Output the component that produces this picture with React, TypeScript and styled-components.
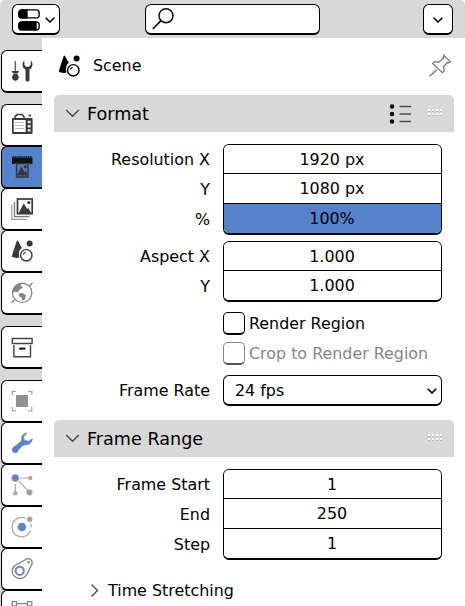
import React from 'react';
import styled, { createGlobalStyle, css } from 'styled-components';

const GREY = '#d8d8d8';
const BLUE = '#5682cb';
const INK = '#3a3a3c';

const GlobalStyle = createGlobalStyle`
  * { box-sizing: border-box; }
  html, body { margin: 0; background: #fff; overflow: hidden; }
  svg { display: block; flex: none; }
`;

const Editor = styled.div`
  width: 465px;
  height: 606px;
  overflow: hidden;
  display: flex;
  flex-direction: column;
  background: #fff;
  color: #000;
  font: 15.9px/20px 'DejaVu Sans', sans-serif;
  white-space: nowrap;
`;

const outlined = css`
  border: 1px solid #000;
  border-bottom-width: 2px;
  border-radius: 6px;
  background: #fff;
`;

const TopBar = styled.header`
  height: 38px;
  flex: none;
  padding: 4px 12px 3px;
  display: flex;
  align-items: stretch;
  background: ${GREY};
  border-radius: 5px 5px 0 0;
`;

const BarButton = styled.button<{ $width: number }>`
  ${outlined}
  width: ${p => p.$width}px;
  padding: 1px 0 0;
  display: flex;
  align-items: center;
  justify-content: center;
  gap: 5px;
`;

const Search = styled.div`
  ${outlined}
  width: 175px;
  margin: 0 103px 0 85px;
  padding-left: 5px;
  display: flex;
  align-items: center;
`;

const Body = styled.div`
  flex: 1;
  min-height: 0;
  display: flex;
`;

const TabColumn = styled.nav`
  width: 42px;
  flex: none;
  padding: 12px 0 0 1px;
  display: flex;
  flex-direction: column;
  gap: 11px;
  background: ${GREY};
`;

const TabGroup = styled.div`
  display: flex;
  flex-direction: column;
`;

const Tab = styled.button<{ $active?: boolean }>`
  ${outlined}
  height: 43px;
  flex: none;
  padding: 0;
  border-right: 0;
  border-radius: 6px 0 0 6px;
  background: ${p => (p.$active ? BLUE : '#fff')};
  display: flex;
  align-items: center;
  justify-content: center;
  & + & { margin-top: -1px; }
`;

const Panel = styled.main`
  flex: 1;
  padding: 0 11px 0 12px;
`;

const ContextRow = styled.div`
  height: 57px;
  padding: 0 2px 2px 3px;
  display: flex;
  align-items: center;
`;

const ContextName = styled.span`
  flex: 1;
  margin-left: 12px;
`;

const SectionBlock = styled.section`
  & + & { margin-top: 14px; }
`;

const SectionHeader = styled.div`
  width: 400px;
  height: 37px;
  padding: 0 11px;
  display: flex;
  align-items: center;
  background: ${GREY};
  border-radius: 5px 5px 0 0;
`;

const SectionTitle = styled.span`
  flex: 1;
  margin-left: 7px;
  font-size: 17.6px;
  line-height: 22px;
`;

const Grip = styled.span`
  width: 14px;
  height: 8px;
  margin: 0 1px 1px 16px;
  display: grid;
  grid-template-columns: repeat(4, 2px);
  grid-auto-rows: 2px;
  gap: 2px;
`;

const GripDot = styled.i`
  background: #fff;
  box-shadow: 0 1px #b4b4b4;
`;

const Fields = styled.div`
  padding-top: 12px;
`;

const FieldRow = styled.div<{ $gap?: number }>`
  margin-top: ${p => p.$gap ?? 0}px;
  display: grid;
  grid-template-columns: 156px 219px;
  column-gap: 13px;
`;

const Labels = styled.div`
  display: flex;
  flex-direction: column;
  text-align: right;
`;

const Label = styled.label`
  height: 30px;
  line-height: 32px;
`;

const NumberStack = styled.div`
  ${outlined}
  overflow: hidden;
  display: flex;
  flex-direction: column;
`;

const NumberField = styled.div<{ $filled?: boolean }>`
  height: 30px;
  line-height: 29px;
  text-align: center;
  padding-right: 1px;
  background: ${p => (p.$filled ? BLUE : '#fff')};
  & + & { border-top: 1px solid #000; }
  &:first-child { height: 28px; line-height: 30px; }
`;

const CheckRow = styled.label<{ $disabled?: boolean; $gap: number }>`
  height: 23px;
  margin: ${p => p.$gap}px 0 0 169px;
  display: flex;
  align-items: center;
  gap: 4px;
  color: ${p => (p.$disabled ? '#868686' : '#000')};
`;

const CheckBox = styled.span<{ $disabled?: boolean }>`
  ${outlined}
  width: 22px;
  height: 23px;
  border-radius: 5px;
  ${p => p.$disabled && 'border-color: #858585; border-bottom-color: #555;'}
`;

const Select = styled.div`
  ${outlined}
  height: 31px;
  padding: 2px 4px 0 11px;
  display: flex;
  align-items: center;
  justify-content: space-between;
`;

const SubSection = styled.div`
  margin-top: 21px;
  padding-left: 35px;
  display: flex;
  align-items: center;
  gap: 8px;
`;

const Chevron = () => (
  <svg width="10" height="6" viewBox="0 0 10 6" fill="none" stroke="#000" strokeWidth="1.6">
    <path d="M.7.7 5 5 9.3.7" />
  </svg>
);

const Disclosure = ({ open = true }: { open?: boolean }) =>
  open ? (
    <svg width="15" height="10" viewBox="0 0 15 10" fill="none" stroke="#444" strokeWidth="1.3">
      <path d="m1.2 1 6.300 6.300L13.800 1" />
    </svg>
  ) : (
    <svg width="11" height="16" viewBox="0 0 11 16" fill="none" stroke="#444" strokeWidth="1.3">
      <path d="m2.500 1.500 6 6-6 6" />
    </svg>
  );

const SceneIcon = ({ color = INK }: { color?: string }) => (
  <svg width="24" height="24" viewBox="0 0 24 24">
    <path d="M6.500 2.500q.8-2.200 1.800 0l3.500 6.300c-2.600 2-3.500 5.200-2.300 9.700-2.500.800-5.500.500-7.800-1Z" fill={color} />
    <circle cx="19.600" cy="4.500" r="3" fill={color} />
    <circle cx="16.300" cy="16.300" r="5.700" fill="#fff" stroke={color} strokeWidth="1.400" />
    <path d="M13.300 15.700a3 3 0 0 1 2.300-2.300" fill="none" stroke={color} strokeWidth="1.200" />
  </svg>
);

const PropertiesIcon = () => (
  <svg width="22" height="22" viewBox="0 0 22 22" fill="#fff" stroke="#000" strokeWidth="1.300">
    <rect x=".8" y=".9" width="20.400" height="8" rx="3" />
    <path d="M9 1H3.800a3 3 0 0 0-3 3v1.900a3 3 0 0 0 3 3H9Z" fill="#000" />
    <rect x=".8" y="12.900" width="20.400" height="8" rx="3" />
    <path d="M18 13H3.800a3 3 0 0 0-3 3v1.900a3 3 0 0 0 3 3H18Z" fill="#000" />
  </svg>
);

const SearchIcon = () => (
  <svg width="24" height="24" viewBox="0 0 24 24" fill="none" stroke="#111" strokeWidth="1.500">
    <circle cx="15" cy="8.700" r="7" />
    <path d="m10 13.700-8.200 8.300" strokeWidth="1.700" />
  </svg>
);

const PinIcon = () => (
  <svg width="24" height="24" viewBox="0 0 24 24" fill="none" stroke="#777" strokeWidth="1.300">
    <path d="m15.700 1.300 6.600 6.300-1.700 1.100-1.300-.2-3.800 4.300.8 4-1.900 1.900L4.700 9.500l1.900-1.900 4 .7 4.600-3.900ZM8.800 15.500 1.500 22.500" />
  </svg>
);

const PresetIcon = () => (
  <svg width="24" height="22" viewBox="0 0 24 22" fill="#000">
    {[3.500, 11, 18.500].map(y => (
      <g key={y}>
        <circle cx="4" cy={y} r="2.200" />
        <path d={`M11.500 ${y}h11.500`} stroke="#444" strokeWidth="1.400" />
      </g>
    ))}
  </svg>
);

const ToolIcon = () => (
  <svg width="24" height="24" viewBox="0 0 24 24" fill={INK}>
    <path d="M4.700 2h1.100v10H4.700ZM2 12h6.800v1.300L7.500 14.300h-4L2 13.300Z" />
    <path d="M3.800 14.500h3.200c3 3 1.800 7.300-1.600 7.300s-4.600-4.300-1.600-7.300Z" />
    <path d="M14.300 1.500v4l1.500 2.200h3.400l1.600-2.200v-4c2.600 2.700 2.200 7-1.300 9.100V21c0 2-4 2-4 0V10.600c-3.600-2.100-3.900-6.400-1.200-9.100Z" />
  </svg>
);

const RenderIcon = () => (
  <svg width="24" height="24" viewBox="0 0 24 24">
    <path d="M5 6V3.600L7 1.600h5l2 2V6" fill="#fff" stroke={INK} strokeWidth="1.500" />
    <rect x="2" y="5" width="20.600" height="16" rx="1" fill={INK} />
    <path d="M3.700 7h12v12H3.700Z" fill="#fff" />
    <path d="M5 9.500h9M5 12.500h9M5 15.500h9" stroke="#aaa" strokeWidth=".8" />
    <path d="M17.800 7.800h2.800v2.500h-2.800ZM17.800 12h2.800v2.500h-2.800ZM17.800 16.200h2.800v2.300h-2.800Z" fill="#eee" />
    <path d="M18.500 1.700H21v1.700h-2.500Z" fill={INK} />
  </svg>
);

const OutputIcon = () => (
  <svg width="24" height="24" viewBox="0 0 24 24">
    <path d="M2 2.500h20.500V9h-3.300V8H5.300v1H2Z" fill="#111" />
    <path d="M2.500 1.900h19.500" stroke="#111" strokeWidth="1.300" strokeDasharray="1.500 .7" />
    <path d="M6.500 8.500H18V22H6.500Z" fill="#5c77ab" stroke="#2d3547" strokeWidth="1.400" />
    <path d="m7 20.500 4.400-9 3 5.500 1.400-1.300 2 4.800Z" fill="#2d3547" />
    <circle cx="15.300" cy="11.700" r="1.500" fill="#2d3547" />
  </svg>
);

const ViewLayerIcon = () => (
  <svg width="24" height="24" viewBox="0 0 24 24" fill="none">
    <path d="M1.800 7.500v14.800h15" stroke="#999" strokeWidth="1.200" />
    <path d="M4.500 5v14.700h15" stroke="#777" strokeWidth="1.300" />
    <rect x="7.500" y="2" width="14.700" height="14.700" stroke={INK} strokeWidth="1.700" />
    <path d="m8.800 16 5-9.700L17 12l1.300-1 3 5Z" fill={INK} />
    <circle cx="18.800" cy="5.500" r="1.600" fill={INK} />
  </svg>
);

const WorldIcon = () => (
  <svg width="24" height="24" viewBox="0 0 24 24" fill="#858585">
    <circle cx="12.200" cy="11.800" r="9.700" fill="none" stroke="#858585" strokeWidth="1.200" />
    <path d="M3.500 7.500 6 4l5-1.800.5 1.600-1.500.7 2 1 .5 1.800-2.200.6-2.200 2.600.6 1.200-2.700-1-3.300.5ZM8.500 12.500l4-.5 3.500 2.300-1 3.600-2.500 2-1-3.400-2-1Z" />
    <path d="m1.500 21.500 3.200-2.700M19.500 4.800l3-2.900" stroke="#777" strokeWidth="1.300" />
  </svg>
);

const CollectionIcon = () => (
  <svg width="24" height="24" viewBox="0 0 24 24" fill="none" stroke="#444" strokeWidth="1.400">
    <path d="M2.300 3.500h19.800v5H2.300ZM3.900 10v11.700h16.600V10" />
    <path d="M10 13.700h4.500" stroke="#222" strokeWidth="2.200" strokeLinecap="round" />
  </svg>
);

const ObjectIcon = () => (
  <svg width="24" height="24" viewBox="0 0 24 24" fill="none" stroke="#aaa" strokeWidth="1.300">
    <path d="M2.300 6V2.300H6M18 2.300h3.800V6M21.800 18v3.800H18M6 21.800H2.300V18" />
    <path d="M6 6h12v12H6Z" fill="#929292" stroke="none" />
  </svg>
);

const ModifierIcon = () => (
  <svg width="24" height="24" viewBox="0 0 24 24">
    <path
      d="M16.700 2c-3.300.3-5.600 3.200-5 6.800-.4 1.900-4.900 5.300-8.100 7.400-3.200 2.500-.1 7.200 3.300 5 2.400-3.500 5.200-6.900 7.500-7.400 3.700.5 7.300-1.300 7.900-5.800l-3.600 2.200-4.300-.7-.9-3.600Z"
      fill={BLUE} stroke="#86889a" strokeWidth=".9"
    />
  </svg>
);

const ParticlesIcon = () => (
  <svg width="24" height="24" viewBox="0 0 24 24" fill="#aaa">
    <path d="M5.300 5h15M5.300 11v9M9 8.700l10 10" stroke="#aaa" strokeWidth="1.200" />
    <circle cx="20.300" cy="5" r="2.200" />
    <circle cx="5.300" cy="20.300" r="2.200" />
    <circle cx="19.500" cy="19.300" r="3.100" />
    <circle cx="19.500" cy="19.300" r="1.200" fill="#8292b5" />
    <circle cx="5.300" cy="5" r="4.700" fill="#fff" />
    <circle cx="5.300" cy="5" r="3.500" fill="#6586c2" stroke="#929cb2" strokeWidth=".8" />
  </svg>
);

const PhysicsIcon = () => (
  <svg width="24" height="24" viewBox="0 0 24 24" fill="none">
    <path d="M15.300 3.100A9.700 9.700 0 1 0 20.700 15.700M20.900 8.900q.5 1.500.4 3.500" stroke="#aaa" strokeWidth="1.300" />
    <circle cx="11.900" cy="12" r="4.300" fill="#6185c5" />
    <circle cx="19.700" cy="4.300" r="2.700" fill="#a2a5aa" />
    <circle cx="19.700" cy="4.300" r="1" fill="#8492b0" />
  </svg>
);

const ConstraintIcon = () => (
  <svg width="24" height="24" viewBox="0 0 24 24" fill="none">
    <path d="M15.800 2.500C18.700.3 23 2.800 22 6.700L17 17.200C12.500 25.300.300 20.500 2.400 12.200 3 10.300 3.700 9.500 5 8.600Z" stroke="#858585" strokeWidth="1.400" />
    <circle cx="9.700" cy="13.900" r="4.100" stroke="#6a88bf" strokeWidth="2" />
    <circle cx="18.600" cy="5.300" r="1.300" fill="#6a88bf" />
  </svg>
);

const DataIcon = () => (
  <svg width="24" height="24" viewBox="0 0 24 24" fill="#fff" stroke="#6784bd" strokeWidth="1.300">
    <path d="M7 4.700h10M4.300 7v12M19.700 7v12" />
    <path d="M2.200 2.600h4.300v4.300H2.200ZM17.500 2.600h4.300v4.300h-4.300ZM2.200 17.500h4.300v4.300H2.200ZM17.500 17.500h4.300v4.300h-4.300Z" stroke="#7d879e" />
  </svg>
);

const tabGroups: { id: string; Icon: React.ComponentType }[][] = [
  [{ id: 'tool', Icon: ToolIcon }],
  [
    { id: 'render', Icon: RenderIcon },
    { id: 'output', Icon: OutputIcon },
    { id: 'view-layer', Icon: ViewLayerIcon },
    { id: 'scene', Icon: SceneIcon },
    { id: 'world', Icon: WorldIcon },
  ],
  [{ id: 'collection', Icon: CollectionIcon }],
  [
    { id: 'object', Icon: ObjectIcon },
    { id: 'modifiers', Icon: ModifierIcon },
    { id: 'particles', Icon: ParticlesIcon },
    { id: 'physics', Icon: PhysicsIcon },
    { id: 'constraints', Icon: ConstraintIcon },
    { id: 'data', Icon: DataIcon },
  ],
];

type SectionProps = { title: string; presets?: boolean; children: React.ReactNode };

const Section = ({ title, presets, children }: SectionProps) => (
  <SectionBlock>
    <SectionHeader>
      <Disclosure />
      <SectionTitle>{title}</SectionTitle>
      {presets && <PresetIcon />}
      <Grip>
        {Array.from({ length: 8 }, (_, i) => (
          <GripDot key={i} />
        ))}
      </Grip>
    </SectionHeader>
    <Fields>{children}</Fields>
  </SectionBlock>
);

type Entry = { label: string; value: string; filled?: boolean };

const NumberRows = ({ entries, gap }: { entries: Entry[]; gap?: number }) => (
  <FieldRow $gap={gap}>
    <Labels>
      {entries.map(e => (
        <Label key={e.label}>{e.label}</Label>
      ))}
    </Labels>
    <NumberStack>
      {entries.map(e => (
        <NumberField key={e.label} $filled={e.filled}>
          {e.value}
        </NumberField>
      ))}
    </NumberStack>
  </FieldRow>
);

export default function App() {
  return (
    <Editor>
      <GlobalStyle />
      <TopBar>
        <BarButton $width={48}>
          <PropertiesIcon />
          <Chevron />
        </BarButton>
        <Search>
          <SearchIcon />
        </Search>
        <BarButton $width={30}>
          <Chevron />
        </BarButton>
      </TopBar>
      <Body>
        <TabColumn>
          {tabGroups.map(group => (
            <TabGroup key={group[0].id}>
              {group.map(({ id, Icon }) => (
                <Tab key={id} $active={id === 'output'}>
                  <Icon />
                </Tab>
              ))}
            </TabGroup>
          ))}
        </TabColumn>
        <Panel>
          <ContextRow>
            <SceneIcon color="#000" />
            <ContextName>Scene</ContextName>
            <PinIcon />
          </ContextRow>
          <Section title="Format" presets>
            <NumberRows
              entries={[
                { label: 'Resolution X', value: '1920 px' },
                { label: 'Y', value: '1080 px' },
                { label: '%', value: '100%', filled: true },
              ]}
            />
            <NumberRows
              gap={6}
              entries={[
                { label: 'Aspect X', value: '1.000' },
                { label: 'Y', value: '1.000' },
              ]}
            />
            <CheckRow $gap={10}>
              <CheckBox />
              Render Region
            </CheckRow>
            <CheckRow $gap={7} $disabled>
              <CheckBox $disabled />
              Crop to Render Region
            </CheckRow>
            <FieldRow $gap={10}>
              <Labels>
                <Label>Frame Rate</Label>
              </Labels>
              <Select>
                24 fps
                <Chevron />
              </Select>
            </FieldRow>
          </Section>
          <Section title="Frame Range">
            <NumberRows
              entries={[
                { label: 'Frame Start', value: '1' },
                { label: 'End', value: '250' },
                { label: 'Step', value: '1' },
              ]}
            />
            <SubSection>
              <Disclosure open={false} />
              Time Stretching
            </SubSection>
          </Section>
        </Panel>
      </Body>
    </Editor>
  );
}
